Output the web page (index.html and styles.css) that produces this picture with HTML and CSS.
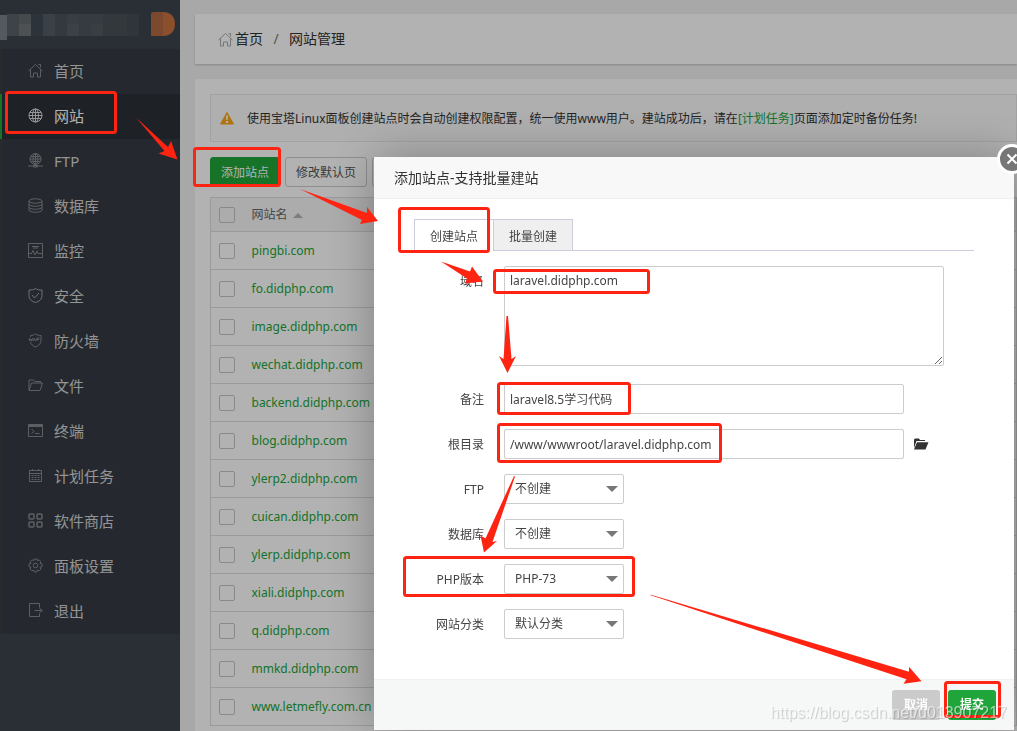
FILE: index.html
```html
<!DOCTYPE html>
<html lang="zh-CN">
<head>
<meta charset="utf-8">
<title>网站管理</title>
<link rel="stylesheet" href="styles.css">
</head>
<body>
<div class="app">
  <aside class="sidebar">
    <div class="brand">
      <svg width="180" height="49" viewBox="0 0 180 49" aria-hidden="true">
        <path fill="#797f88" d="M0 15h7v25H0z"/>
        <path fill="#5a6167" d="M7 14h12v22H7z"/>
        <path fill="#636a6f" d="M19 14h12v10H19z"/><path fill="#707479" d="M19 24h12v12H19z"/>
        <path fill="#414953" d="M31 14h12v22H31z"/>
        <path fill="#545c63" d="M43 14h12v22H43z"/><path fill="#4a525a" d="M55 14h12v22H55z"/>
        <path fill="#50585f" d="M67 14h12v10H67z"/><path fill="#575e66" d="M67 24h12v12H67z"/>
        <path fill="#4d555c" d="M79 14h24v22H79z"/><path fill="#525960" d="M91 24h12v12H91z"/>
        <path fill="#495158" d="M103 14h24v22h-24z"/><path fill="#454d57" d="M127 14h12v22h-12z"/>
        <path fill="#b06942" d="M151 14q0-2 3-2h9v24h-12z"/><path fill="#c8713f" d="M163 12c7 0 12 4 12 12s-5 12-12 12z"/>
      </svg>
    </div>
    <nav class="menu">
      <a class="item" href="#"><svg class="ico" viewBox="0 0 15 15"><path d="M.5 8L7.500 1.500 14.500 8M2.500 6.500v7.500h3v-4h4v4h3V6.500M10.500 1.500h2v3"/></svg>首页</a>
      <a class="item active" href="#"><svg class="ico" viewBox="0 0 15 15"><circle cx="7.500" cy="7.500" r="6.500"/><ellipse cx="7.500" cy="7.500" rx="3" ry="6.500"/><path d="M7.500 1v13M1 7.500h13M2 4.500h11M2 10.500h11"/></svg>网站</a>
      <a class="item" href="#"><svg class="ico" viewBox="0 0 15 15"><circle cx="7.500" cy="6" r="5.500"/><ellipse cx="7.500" cy="6" rx="2.500" ry="5.500"/><path d="M7.500 .5v11M2 6h11M3 3.500h9M3 8.500h9M0 13h15"/><path d="M5.500 12.500h4v1.500h-4z"/></svg>FTP</a>
      <a class="item" href="#"><svg class="ico" viewBox="0 0 15 15"><ellipse cx="7.500" cy="3" rx="6.500" ry="2.200"/><path d="M1 3v9c0 3 13 3 13 0V3M1 6c0 3 13 3 13 0M1 9c0 3 13 3 13 0"/></svg>数据库</a>
      <a class="item" href="#"><svg class="ico" viewBox="0 0 15 15"><path d="M.5 .5h14v14H.5zM.5 10.500h3l1.500-3 2 4.500 2-4 1 2.500h4.500M4 3.500h7M5 5h5"/></svg>监控</a>
      <a class="item" href="#"><svg class="ico shield" viewBox="0 0 15 15"><path d="M7.500 .5C5.500 2 3.500 2 1 2v5.500c0 4 3 6 6.500 7C11 13.500 14 11.500 14 7.500V2c-2.500 0-4.500 0-6.500-1.500zM4 7l2.500 3L11 5"/></svg>安全</a>
      <a class="item" href="#"><svg class="ico" viewBox="0 0 15 15"><path d="M2.500 4V2.500c2 0 3.500-.5 5-1.500C9 2 11 2.500 13 2.500v5c0 3.500-2.500 5-5.500 6.500-2.500-1-4.500-2.500-5-5M1 5l.8 3 1-2 1 2 .7-3M5.500 8l1-3 1 3M9 8V5h2.500M9 6.500h2"/></svg>防火墙</a>
      <a class="item" href="#"><svg class="ico" viewBox="0 0 15 15"><path d="M1 12.500V2h4.500L7 3.500h5.500V5M1 12.500L3.500 5h11L12 12.500z"/></svg>文件</a>
      <a class="item" href="#"><svg class="ico" viewBox="0 0 15 15"><path d="M.5 1.500h14v12H.5zM.5 3.500h14M3.500 6L6 8.500 3.500 10.500M7 10.500h4.500M1 2.500h13"/></svg>终端</a>
      <a class="item" href="#"><svg class="ico" viewBox="0 0 15 15"><path d="M1.500 2.500h12v11h-12zM1.500 5.500h12M4.500 1v2M10.500 1v2"/><path stroke-dasharray="2 1" d="M3.500 7.500h8M3.500 9.500h8M3.500 11.500h8"/></svg>计划任务</a>
      <a class="item" href="#"><svg class="ico bold" viewBox="0 0 15 15"><rect x="1" y="1" width="5" height="5" rx="1"/><rect x="9" y="1" width="5" height="5" rx="1"/><rect x="1" y="9" width="5" height="5" rx="1"/><rect x="9" y="9" width="5" height="5" rx="1"/></svg>软件商店</a>
      <a class="item" href="#"><svg class="ico" viewBox="0 0 15 15"><circle cx="7.500" cy="7.500" r="2.300"/><path d="M6.200 1h2.600l.5 1.700 1.700-.9 1.800 1.800-.8 1.700 2 .7v2.600l-2 .6.9 1.800-1.800 1.800-1.800-.8-.5 1.900H6.200l-.5-1.900-1.800.8-1.800-1.800.9-1.800-2-.6V6l2-.7-.9-1.700 1.900-1.800 1.700.9z"/></svg>面板设置</a>
      <a class="item" href="#"><svg class="ico" viewBox="0 0 15 15"><path d="M11.500 4.500v-4h-10v13h10v-3M6.500 7.500h8M11.500 5L14 7.500 11.500 10"/></svg>退出</a>
    </nav>
  </aside>

  <main class="main">
    <div class="card crumbs">
      <svg class="home" viewBox="0 0 15 15"><path d="M.5 8L7.500 1.500 14.500 8M2.500 6.500v7.500h3v-4h4v4h3V6.500M10.500 1.500h2v3"/></svg>
      <a href="#">首页</a><span class="slash">/</span><a href="#">网站管理</a>
    </div>
    <section class="card sites">
      <div class="notice">
        <svg width="14" height="14" viewBox="0 0 14 14"><path fill="#fca51a" stroke="#fca51a" stroke-linejoin="round" d="M7 1.500L13.500 13H.5z"/><path fill="#fff" d="M6 4.500h2L7.600 9H6.400zM6 10h2v2H6z"/></svg>
        <p>使用宝塔Linux面板创建站点时会自动创建权限配置，统一使用www用户。建站成功后，请在<a href="#">[计划任务]</a>页面添加定时备份任务!</p>
      </div>
      <div class="tools">
        <button class="btn primary">添加站点</button>
        <button class="btn">修改默认页</button>
        <button class="btn blank"></button>
      </div>
      <table class="table">
        <thead><tr><th class="pick"><input type="checkbox" aria-label="全选"></th><th>网站名<i class="sort"></i></th></tr></thead>
        <tbody>
          <tr><td class="pick"><input type="checkbox" aria-label="pingbi.com"></td><td><a href="#">pingbi.com</a></td></tr>
          <tr><td class="pick"><input type="checkbox" aria-label="fo.didphp.com"></td><td><a href="#">fo.didphp.com</a></td></tr>
          <tr><td class="pick"><input type="checkbox" aria-label="image.didphp.com"></td><td><a href="#">image.didphp.com</a></td></tr>
          <tr><td class="pick"><input type="checkbox" aria-label="wechat.didphp.com"></td><td><a href="#">wechat.didphp.com</a></td></tr>
          <tr><td class="pick"><input type="checkbox" aria-label="backend.didphp.com"></td><td><a href="#">backend.didphp.com</a></td></tr>
          <tr><td class="pick"><input type="checkbox" aria-label="blog.didphp.com"></td><td><a href="#">blog.didphp.com</a></td></tr>
          <tr><td class="pick"><input type="checkbox" aria-label="ylerp2.didphp.com"></td><td><a href="#">ylerp2.didphp.com</a></td></tr>
          <tr><td class="pick"><input type="checkbox" aria-label="cuican.didphp.com"></td><td><a href="#">cuican.didphp.com</a></td></tr>
          <tr><td class="pick"><input type="checkbox" aria-label="ylerp.didphp.com"></td><td><a href="#">ylerp.didphp.com</a></td></tr>
          <tr><td class="pick"><input type="checkbox" aria-label="xiali.didphp.com"></td><td><a href="#">xiali.didphp.com</a></td></tr>
          <tr><td class="pick"><input type="checkbox" aria-label="q.didphp.com"></td><td><a href="#">q.didphp.com</a></td></tr>
          <tr><td class="pick"><input type="checkbox" aria-label="mmkd.didphp.com"></td><td><a href="#">mmkd.didphp.com</a></td></tr>
          <tr><td class="pick"><input type="checkbox" aria-label="www.letmefly.com.cn"></td><td><a href="#">www.letmefly.com.cn</a></td></tr>
        </tbody>
      </table>
    </section>
  </main>
</div>

<div class="overlay">
  <div class="modal" role="dialog" aria-labelledby="dlg-title">
    <button class="close" aria-label="关闭"><svg width="12" height="12" viewBox="0 0 12 12"><path d="M1.500 1.500l9 9M10.500 1.500l-9 9"/></svg></button>
    <h2 class="title" id="dlg-title">添加站点-支持批量建站</h2>
    <form class="body">
      <div class="tabs">
        <button type="button" class="tab on">创建站点</button>
        <button type="button" class="tab">批量创建</button>
      </div>
      <div class="row"><label for="domain">域名</label><textarea id="domain">laravel.didphp.com</textarea></div>
      <div class="row"><label for="note">备注</label><input class="text" id="note" value="laravel8.5学习代码"></div>
      <div class="row"><label for="root">根目录</label><input class="text" id="root" value="/www/wwwroot/laravel.didphp.com">
        <button type="button" class="folder" aria-label="选择目录"><svg width="16" height="12" viewBox="0 0 16 12"><path fill="#333" d="M1 10V1.500L2 .5h4l1 1.500h5V3H3.500zM4 4.200h11.500L12.500 11.500H1z"/></svg></button></div>
      <div class="row"><label for="ftp">FTP</label><span class="pickbox"><select id="ftp"><option>不创建</option></select></span></div>
      <div class="row"><label for="db">数据库</label><span class="pickbox"><select id="db"><option>不创建</option></select></span></div>
      <div class="row"><label for="php">PHP版本</label><span class="pickbox"><select id="php"><option>PHP-73</option></select></span></div>
      <div class="row"><label for="cat">网站分类</label><span class="pickbox"><select id="cat"><option>默认分类</option></select></span></div>
    </form>
    <div class="foot">
      <button class="act">取消</button>
      <button class="act ok">提交</button>
    </div>
  </div>
</div>

<svg class="marks" width="1017" height="731" viewBox="0 0 1017 731" aria-hidden="true">
  <g fill="none" stroke="#ff2312" stroke-width="3">
    <rect x="6.500" y="92.500" width="109" height="40" rx="2"/>
    <rect x="194.500" y="148.500" width="85" height="37" rx="2"/>
    <rect x="399.500" y="208.500" width="89" height="43" rx="2"/>
    <rect x="494.500" y="270.500" width="154" height="22" rx="2"/>
    <rect x="498.500" y="383.500" width="131" height="30" rx="2"/>
    <rect x="498.500" y="424.500" width="222" height="37" rx="2"/>
    <rect x="404.500" y="557.500" width="229" height="38" rx="2"/>
    <rect x="945.500" y="682.500" width="54" height="34" rx="2"/>
  </g>
  <g fill="#ff2312">
    <path d="M136 117.500L168 147l3-6 6.500 18.500-19-6 6-2.500z"/>
    <path d="M300 189l67 24 0-6 11 14-18 3 2-4z"/>
    <path d="M441 261.500l29 10 2-5 11 15-18 2 2-5z"/>
    <path d="M506.500 316h1.500l3.500 43 4.500-3-8.500 17-8.500-17 4.500 3z"/>
    <path d="M514 476l1 .5-22.500 65.500 4.500-1-13 11.500-3.500-17 5 3z"/>
    <path d="M650 595l1-.3 258 77 0-5 12.500 14.500-18 2.500 3-4.500z"/>
  </g>
</svg>
<div class="watermark">https://blog.csdn.net/u013907217</div>
</body>
</html>
```
FILE: styles.css
```css
* { box-sizing: border-box; }
body {
  margin: 0;
  overflow: hidden;
  background: #f1f1f1;
  color: #444;
  font: 12px/18px "Noto Sans", "Noto Sans CJK SC", sans-serif;
}
button, input, select, textarea { font: inherit; color: inherit; margin: 0; }
a { color: inherit; text-decoration: none; }
.app { display: flex; height: 100vh; overflow: hidden; }

.sidebar { flex: 0 0 180px; background: #3c444d; }
.brand { height: 49px; }
.brand svg { display: block; }
.menu { background: #353c44; }
.item {
  display: flex;
  align-items: center;
  gap: 11px;
  height: 45px;
  padding: 0 0 2px 26px;
  border-left: 2px solid #3b3d3b;
  color: #d4d4d4;
  font-size: 15px;
}
.item.active { background: #2c3035; border-color: #20a53a; color: #fff; }
.ico { width: 15px; height: 15px; fill: none; stroke: #868a8e; stroke-width: 1; }
.ico.bold { stroke-width: 1.5; }
.ico.shield { stroke: #a0a4a8; }
.active .ico { stroke: #d8d8d8; }

.main { flex: 1; min-width: 0; padding: 14px 0 0 15px; }
.card { background: #fff; }
.crumbs {
  display: flex;
  align-items: center;
  height: 50px;
  padding-left: 23px;
  margin-bottom: 15px;
  box-shadow: 0 1px 2px rgba(0, 0, 0, .2);
  color: #333;
  font-size: 14px;
}
.home { width: 15px; height: 15px; margin-right: 2px; fill: none; stroke: #aaa; }
.slash { width: 26px; text-align: center; color: #777; }
.sites { padding: 15px 0 15px 15px; min-height: 100vh; }
.notice {
  display: flex;
  align-items: center;
  gap: 13px;
  height: 48px;
  padding-left: 9px;
  margin-bottom: 15px;
  border: 1px solid #e8e8e8;
  background: #fbfbfb;
  color: #333;
  white-space: nowrap;
}
.notice p { margin: 0; padding-top: 2px; }
.notice a, td a { color: #20a53a; }
.tools { display: flex; gap: 5px; margin-bottom: 10px; }
.btn {
  height: 30px;
  padding: 2px 10px 0;
  border: 1px solid #ccc;
  border-radius: 3px;
  background: #fff;
  color: #555;
  white-space: nowrap;
}
.btn.primary { border-color: #20a53a; background: #20a53a; color: #fff; }
.btn.blank { width: 70px; }
.table {
  width: 100%;
  border-collapse: collapse;
  border: 1px solid #ddd;
  table-layout: fixed;
}
.table th { height: 34px; background: #f6f6f6; color: #666; font-weight: 400; text-align: left; }
.table th, .table td { padding: 0 8px; border-bottom: 1px solid #ddd; }
.table td { height: 38px; }
.table .pick { width: 33px; }
.pick input {
  appearance: none;
  display: block;
  width: 16px;
  height: 16px;
  border: 1px solid #c4c4c4;
  border-radius: 2px;
}
.sort {
  display: inline-block;
  margin-left: 5px;
  vertical-align: middle;
  border: 5px solid transparent;
  border-top: 0;
  border-bottom-color: #b5b5b5;
}

.overlay {
  position: fixed;
  inset: 0;
  display: flex;
  justify-content: flex-end;
  align-items: flex-start;
  padding: 157px 3px 0 0;
  background: rgba(0, 0, 0, .3);
}
.modal {
  position: relative;
  width: 640px;
  border-radius: 2px;
  background: #fff;
  box-shadow: 1px 1px 50px rgba(0, 0, 0, .3);
}
.close {
  position: absolute;
  top: -13px;
  right: -13px;
  display: grid;
  place-items: center;
  width: 30px;
  height: 30px;
  padding: 0;
  border: 3px solid #fff;
  border-radius: 50%;
  background: #777;
}
.close path { stroke: #fff; stroke-width: 2; fill: none; }
.title {
  margin: 0;
  padding: 0 20px;
  border-bottom: 1px solid #eee;
  background: #f8f8f8;
  color: #333;
  font-size: 14px;
  font-weight: 400;
  line-height: 41px;
}
.body { padding: 20px 40px 25px; }
.tabs { display: flex; height: 32px; margin-bottom: 15px; border-bottom: 1px solid #ccccdd; }
.tab {
  width: 80px;
  height: 32px;
  padding: 4px 0 0;
  border: 1px solid #ccccdd;
  background: #efefef;
}
.tab + .tab { margin-left: -1px; }
.tab.on { background: #fff; border-bottom-color: #fff; }
.row { display: flex; align-items: flex-start; margin-bottom: 15px; }
.row label { width: 70px; height: 30px; margin-right: 20px; line-height: 32px; text-align: right; }
.row textarea {
  width: 440px;
  height: 100px;
  margin-bottom: 3px;
  padding: 5px;
  border: 1px solid #ccc;
  border-radius: 2px;
  outline: 0;
}
.row .text { width: 400px; height: 30px; padding: 0 5px; border: 1px solid #ccc; border-radius: 2px; }
.folder { display: grid; place-items: center; height: 30px; margin-left: 9px; padding: 0; border: 0; background: none; }
.pickbox { position: relative; width: 120px; }
.pickbox select {
  appearance: none;
  display: block;
  width: 100%;
  height: 30px;
  padding: 0 10px;
  border: 1px solid #ccc;
  border-radius: 2px;
  background: #fff;
}
.pickbox::after {
  content: "";
  position: absolute;
  top: 12px;
  right: 6px;
  border: 6px solid transparent;
  border-top-color: #777;
  border-bottom: 0;
}
.foot {
  display: flex;
  justify-content: flex-end;
  gap: 8px;
  padding: 10px 18px;
  border-top: 1px solid #edf1f1;
  background: #f6f8f8;
}
.act {
  width: 48px;
  height: 30px;
  padding: 0;
  border: 0;
  border-radius: 3px;
  background: #cbcbcb;
  color: #fff;
  font-weight: 700;
}
.act.ok { background: #20a53a; }

.marks { position: fixed; top: 0; left: 0; pointer-events: none; }
.watermark {
  position: fixed;
  right: 10px;
  bottom: 8px;
  color: rgba(255, 255, 255, .6);
  font: 16px/20px "Liberation Sans", Arial, sans-serif;
  text-shadow: 1px 1px 1px rgba(0, 0, 0, .2);
  pointer-events: none;
}
```
